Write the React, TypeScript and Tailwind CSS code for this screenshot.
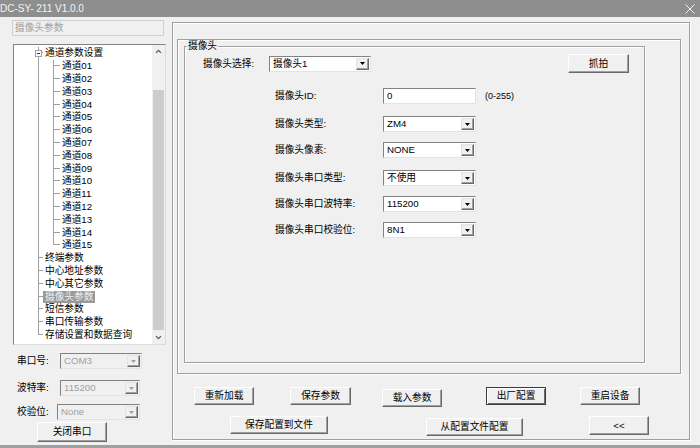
import React from "react";

const LINE = "border-[#a0a0a0]";

function Arrow({ disabled }: { disabled?: boolean }) {
  return (
    <div className="w-[13px] h-full flex items-center justify-center bg-[#f0f0f0] border-t border-l border-t-[#e3e3e3] border-l-[#e3e3e3] border-r border-b border-r-[#696969] border-b-[#696969] shadow-[inset_-1px_-1px_0_#a0a0a0]">
      <svg width="5" height="3" viewBox="0 0 5 3">
        <path d="M0 0H5L2.5 3Z" fill={disabled ? "#a0a0a0" : "#000"} />
      </svg>
    </div>
  );
}

function Sel({ value, className, disabled }: { value: string; className: string; disabled?: boolean }) {
  return (
    <div
      className={
        className +
        " h-[16px] flex items-stretch border border-t-[#828282] border-l-[#828282] border-r-[#e3e3e3] border-b-[#e3e3e3] p-px " +
        (disabled ? "bg-[#f0f0f0] text-[#a0a0a0]" : "bg-white text-black")
      }
    >
      <div className="flex-1 flex items-center px-[2px] leading-none whitespace-nowrap overflow-hidden">{value}</div>
      <Arrow disabled={disabled} />
    </div>
  );
}

function Btn({ children, className, def }: { children: React.ReactNode; className: string; def?: boolean }) {
  return (
    <div
      className={
        className +
        " flex items-center justify-center bg-[#f0f0f0] leading-none whitespace-nowrap " +
        (def
          ? "border border-[#3c3c3c] shadow-[inset_1px_1px_0_#fff,inset_-1px_-1px_0_#696969]"
          : "border-t border-l border-t-white border-l-white border-r border-b border-r-[#696969] border-b-[#696969] shadow-[inset_-1px_-1px_0_#a0a0a0]")
      }
    >
      {children}
    </div>
  );
}

function TopRow({ label, last, selected, expander }: { label: string; last?: boolean; selected?: boolean; expander?: boolean }) {
  return (
    <div className="h-[12.8px] flex items-stretch">
      <div className="w-[24px] shrink-0" />
      <div className="w-[5px] shrink-0 flex flex-col relative">
        <div className={"h-1/2 border-l border-b " + LINE} />
        <div className={last ? "h-1/2" : "h-1/2 border-l " + LINE} />
        {expander && (
          <div className="absolute left-[-3px] top-[3px] w-[7px] h-[7px] border border-[#a0a0a0] bg-white flex items-center justify-center">
            <div className="w-[3px] h-px bg-[#333]" />
          </div>
        )}
      </div>
      <span
        className={
          "px-[2px] leading-[12px] mt-[0.4px] h-[12px] whitespace-nowrap " +
          (selected ? "bg-[#9a9a9a] text-[#eeeeee]" : "text-black")
        }
      >
        {label}
      </span>
    </div>
  );
}

function ChildRow({ label, last }: { label: string; last?: boolean }) {
  return (
    <div className="h-[12.8px] flex items-stretch">
      <div className="w-[24px] shrink-0" />
      <div className={"w-[15px] shrink-0 border-l " + LINE} />
      <div className="w-[7px] shrink-0 flex flex-col">
        <div className={"h-1/2 border-l border-b " + LINE} />
        <div className={last ? "h-1/2" : "h-1/2 border-l " + LINE} />
      </div>
      <span className="px-[2px] leading-[12px] mt-[0.4px] h-[12px] whitespace-nowrap">{label}</span>
    </div>
  );
}

function Chevron({ down }: { down?: boolean }) {
  return (
    <svg width="7" height="5" viewBox="0 0 7 5">
      <path d={down ? "M1 1.2L3.5 3.7L6 1.2" : "M1 3.8L3.5 1.3L6 3.8"} stroke="#555" strokeWidth="1.2" fill="none" />
    </svg>
  );
}

function Left() {
  const channels = Array.from({ length: 15 }, (_, i) => "通道" + String(i + 1).padStart(2, "0"));
  return (
    <div className="w-[172px] shrink-0 flex flex-col">
      <div className="mt-[3px] ml-[12px] w-[152px] h-[16px] border border-[#cfcfcf] flex items-center px-[2px] text-[#a0a0a0] leading-none">
        摄像头参数
      </div>
      <div className="mt-[8px] ml-[13px] w-[153px] h-[301px] flex border border-t-[#828282] border-l-[#828282] border-r-[#dcdcdc] border-b-[#dcdcdc] bg-white">
        <div className="flex-1 pt-[2px] overflow-hidden">
          <TopRow label="通道参数设置" expander />
          {channels.map((c, i) => (
            <ChildRow key={c} label={c} last={i === channels.length - 1} />
          ))}
          <TopRow label="终端参数" />
          <TopRow label="中心地址参数" />
          <TopRow label="中心其它参数" />
          <TopRow label="摄像头参数" selected />
          <TopRow label="短信参数" />
          <TopRow label="串口传输参数" />
          <TopRow label="存储设置和数据查询" last />
        </div>
        <div className="w-[13px] flex flex-col bg-[#f0f0f0]">
          <div className="h-[13px] flex items-center justify-center">
            <Chevron />
          </div>
          <div className="flex-1 flex flex-col pt-[32px] pb-px px-px">
            <div className="flex-1 bg-[#cdcdcd]" />
          </div>
          <div className="h-[13px] flex items-center justify-center">
            <Chevron down />
          </div>
        </div>
      </div>
      <div className="mt-[8px] flex items-center">
        <span className="ml-[17px] w-[43px] leading-none">串口号:</span>
        <Sel value="COM3" className="w-[82px]" disabled />
      </div>
      <div className="mt-[11px] flex items-center">
        <span className="ml-[17px] w-[43px] leading-none">波特率:</span>
        <Sel value="115200" className="w-[80px]" disabled />
      </div>
      <div className="mt-[8px] flex items-center">
        <span className="ml-[17px] w-[40px] leading-none">校验位:</span>
        <Sel value="None" className="w-[83px]" disabled />
      </div>
      <Btn className="mt-[2px] ml-[37px] w-[70px] h-[20px]">关闭串口</Btn>
    </div>
  );
}

const ETCH = "border border-[#a0a0a0] shadow-[inset_1px_1px_0_#fff,1px_1px_0_#fff]";

function FieldRow({ label, children, mt }: { label: string; children: React.ReactNode; mt: string }) {
  return (
    <div className={mt + " flex items-center"}>
      <span className="ml-[90px] w-[108px] leading-none whitespace-nowrap">{label}</span>
      {children}
    </div>
  );
}

function Right() {
  return (
    <div className="flex-1">
      <div className={"mt-[5px] w-[518px] h-[418px] flex flex-col " + ETCH}>
        <div className={"ml-[4px] mt-[16px] w-[504px] h-[335px] flex flex-col " + ETCH}>
          <div className={"relative ml-[6px] mt-[6px] w-[461px] h-[317px] flex flex-col " + ETCH}>
            <span className="absolute -top-[7px] left-[2px] px-[1px] bg-[#f0f0f0] leading-[12px]">摄像头</span>
            <div className="mt-[7px] h-[19px] flex items-center">
              <span className="ml-[18px] w-[66px] leading-none whitespace-nowrap">摄像头选择:</span>
              <Sel value="摄像头1" className="w-[102px]" />
              <Btn className="ml-[197px] w-[61px] h-[19px]">抓拍</Btn>
            </div>
            <FieldRow label="摄像头ID:" mt="mt-[15px]">
              <div className="w-[93px] h-[16px] bg-white border border-t-[#828282] border-l-[#828282] border-r-[#e3e3e3] border-b-[#e3e3e3] flex items-center px-[3px] leading-none">
                0
              </div>
              <span className="ml-[9px] leading-none text-[9px]">(0-255)</span>
            </FieldRow>
            <FieldRow label="摄像头类型:" mt="mt-[12px]">
              <Sel value="ZM4" className="w-[93px]" />
            </FieldRow>
            <FieldRow label="摄像头像素:" mt="mt-[10px]">
              <Sel value="NONE" className="w-[93px]" />
            </FieldRow>
            <FieldRow label="摄像头串口类型:" mt="mt-[12px]">
              <Sel value="不使用" className="w-[93px]" />
            </FieldRow>
            <FieldRow label="摄像头串口波特率:" mt="mt-[10px]">
              <Sel value="115200" className="w-[93px]" />
            </FieldRow>
            <FieldRow label="摄像头串口校验位:" mt="mt-[10px]">
              <Sel value="8N1" className="w-[93px]" />
            </FieldRow>
          </div>
        </div>
        <div className="mt-[13px] ml-[21px] flex items-start">
          <Btn className="w-[60px] h-[18px]">重新加载</Btn>
          <Btn className="ml-[36px] w-[61px] h-[18px]">保存参数</Btn>
          <Btn className="ml-[31px] mt-[2px] w-[60px] h-[18px]">载入参数</Btn>
          <Btn className="ml-[44px] w-[60px] h-[18px]" def>
            出厂配置
          </Btn>
          <Btn className="ml-[34px] w-[60px] h-[18px]">重启设备</Btn>
        </div>
        <div className="mt-[9px] ml-[57px] flex items-start">
          <Btn className="w-[98px] h-[18px]">保存配置到文件</Btn>
          <Btn className="ml-[98px] mt-[2px] w-[97px] h-[18px]">从配置文件配置</Btn>
          <Btn className="ml-[66px] w-[60px] h-[19px]">&lt;&lt;</Btn>
        </div>
      </div>
    </div>
  );
}

export default function App() {
  return (
    <div className="w-[700px] h-[448px] bg-[#f0f0f0] flex flex-col overflow-hidden text-[9.7px] text-black font-['Liberation_Sans','Noto_Sans_CJK_SC',sans-serif]">
      <div className="h-[17px] shrink-0 bg-[#8e8e8e] flex items-center justify-between text-[#f4f4f4] text-[10px] pr-[5px]">
        <span className="leading-none">DC-SY- 211 V1.0.0</span>
        <svg width="10" height="10" viewBox="0 0 10 10">
          <path d="M0.5 0.5L9.5 9.5M9.5 0.5L0.5 9.5" stroke="#fff" strokeWidth="0.9" />
        </svg>
      </div>
      <div className="flex-1 flex">
        <Left />
        <Right />
      </div>
      <div className="h-[3px] shrink-0 bg-[#a0a0a0]" />
    </div>
  );
}
